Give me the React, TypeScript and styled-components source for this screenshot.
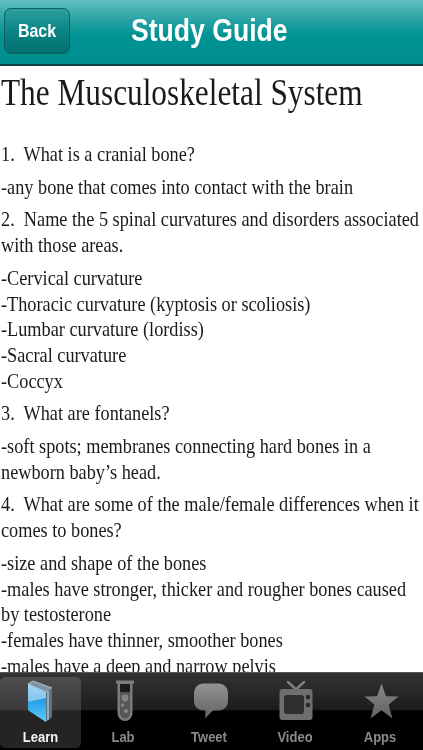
import React from "react";
import styled, { createGlobalStyle } from "styled-components";

const GlobalStyle = createGlobalStyle`
  html, body {
    margin: 0;
    padding: 0;
    background: #fff;
  }
  #root {
    width: 423px;
    height: 750px;
  }
`;

const lines: { text: string; gap: number }[] = [
  { text: "1.  What is a cranial bone?", gap: 0 },
  { text: "-any bone that comes into contact with the brain", gap: 7 },
  { text: "2.  Name the 5 spinal curvatures and disorders associated", gap: 7 },
  { text: "with those areas.", gap: 0 },
  { text: "-Cervical curvature", gap: 7 },
  { text: "-Thoracic curvature (kyptosis or scoliosis)", gap: 0 },
  { text: "-Lumbar curvature (lordiss)", gap: 0 },
  { text: "-Sacral curvature", gap: 0 },
  { text: "-Coccyx", gap: 0 },
  { text: "3.  What are fontanels?", gap: 7 },
  { text: "-soft spots; membranes connecting hard bones in a", gap: 7 },
  { text: "newborn baby’s head.", gap: 0 },
  { text: "4.  What are some of the male/female differences when it", gap: 7 },
  { text: "comes to bones?", gap: 0 },
  { text: "-size and shape of the bones", gap: 7 },
  { text: "-males have stronger, thicker and rougher bones caused", gap: 0 },
  { text: "by testosterone", gap: 0 },
  { text: "-females have thinner, smoother bones", gap: 0 },
  { text: "-males have a deep and narrow pelvis", gap: 0 },
];

const BookIcon = () => (
  <svg width="26" height="43" viewBox="0 0 26 43">
    <defs>
      <linearGradient id="bookTop" x1="0" y1="0" x2="0" y2="1">
        <stop offset="0" stopColor="#a4d6f4" />
        <stop offset="1" stopColor="#5aaee8" />
      </linearGradient>
      <linearGradient id="bookBottom" x1="0" y1="0" x2="0" y2="1">
        <stop offset="0" stopColor="#1f9ae8" />
        <stop offset="1" stopColor="#5ccbf6" />
      </linearGradient>
    </defs>
    <path d="M1 4 L6 1 L25 8 L19 12 Z" fill="#7f93a4" stroke="#c4d2dc" strokeWidth="0.8" />
    <path d="M19 12 L25 8 L25 37 L19 42 Z" fill="#5f7284" />
    <path d="M21 11 V40" stroke="#d5e2ea" strokeWidth="1" />
    <path d="M1 4 L19 12 L19 42 L1 30 Z" fill="url(#bookTop)" />
    <path d="M1 22 L19 18 L19 42 L1 30 Z" fill="url(#bookBottom)" />
  </svg>
);

const TubeIcon = () => (
  <svg width="18" height="42" viewBox="0 0 18 42">
    <path d="M0 0.5 H18 V3.5 H16.5 V33 A7.5 8 0 0 1 1.5 33 V3.5 H0 Z" fill="#7c7c7c" />
    <rect x="4" y="4" width="10" height="8" fill="#1a1a1a" />
    <path d="M4 12 H14 V33 A5 5.5 0 0 1 4 33 Z" fill="#565656" />
    <circle cx="9" cy="18" r="3.4" fill="#858585" />
    <circle cx="6.5" cy="25" r="1.7" fill="#858585" />
    <circle cx="10" cy="31" r="2.1" fill="#858585" />
  </svg>
);

const BubbleIcon = () => (
  <svg width="34" height="36" viewBox="0 0 34 36">
    <defs>
      <linearGradient id="bubbleFill" x1="0" y1="0" x2="0" y2="1">
        <stop offset="0" stopColor="#939393" />
        <stop offset="1" stopColor="#626262" />
      </linearGradient>
    </defs>
    <path
      d="M9 0.5 H25 A9 9 0 0 1 34 9.5 V18.5 A9 9 0 0 1 25 27.5 H19 L11 35.5 L11.5 27.5 H9 A9 9 0 0 1 0 18.5 V9.5 A9 9 0 0 1 9 0.5 Z"
      fill="url(#bubbleFill)"
    />
  </svg>
);

const TvIcon = () => (
  <svg width="34" height="40" viewBox="0 0 34 40">
    <path d="M9 1 L17 8.5 L25 1" fill="none" stroke="#7c7c7c" strokeWidth="2.6" strokeLinecap="round" />
    <rect x="0.5" y="8" width="33" height="31" rx="3" fill="#6e6e6e" />
    <rect x="5" y="14" width="20" height="19" rx="3" fill="#2f2f2f" />
    <circle cx="29" cy="16" r="2.2" fill="#262626" />
    <circle cx="29" cy="24" r="2.2" fill="#262626" />
  </svg>
);

const StarIcon = () => (
  <svg width="35" height="38" viewBox="0 0 36 38">
    <defs>
      <linearGradient id="starFill" x1="0" y1="0" x2="0" y2="1">
        <stop offset="0" stopColor="#8a8a8a" />
        <stop offset="1" stopColor="#5f5f5f" />
      </linearGradient>
    </defs>
    <path
      d="M18 1 L22.6 14 L35.5 14.4 L25.4 22.6 L29.2 37 L18 28.6 L6.8 37 L10.6 22.6 L0.5 14.4 L13.4 14 Z"
      fill="url(#starFill)"
    />
  </svg>
);

const tabs = [
  { label: "Learn", icon: <BookIcon />, active: true, shift: -1 },
  { label: "Lab", icon: <TubeIcon />, active: false, shift: 4 },
  { label: "Tweet", icon: <BubbleIcon />, active: false, shift: 4 },
  { label: "Video", icon: <TvIcon />, active: false, shift: 2 },
  { label: "Apps", icon: <StarIcon />, active: false, shift: 2 },
];

export default function App() {
  return (
    <>
      <GlobalStyle />
      <Page>
        <Header>
          <BackButton>
            <BackLabel>Back</BackLabel>
          </BackButton>
          <Title>Study Guide</Title>
        </Header>
        <Content>
          <Heading>The Musculoskeletal System</Heading>
          {lines.map((line) => (
            <Line key={line.text} $gap={line.gap}>
              {line.text}
            </Line>
          ))}
        </Content>
        <TabBar>
          {tabs.map((tab) => (
            <Tab key={tab.label} $active={tab.active}>
              <IconSlot $shift={tab.shift}>{tab.icon}</IconSlot>
              <TabLabel $active={tab.active}>{tab.label}</TabLabel>
            </Tab>
          ))}
        </TabBar>
      </Page>
    </>
  );
}

const Page = styled.div`
  width: 423px;
  height: 750px;
  display: flex;
  flex-direction: column;
  overflow: hidden;
  background: #fff;
`;

const Header = styled.header`
  height: 66px;
  flex: none;
  display: flex;
  align-items: center;
  padding: 0 0 3px 4px;
  box-sizing: border-box;
  background: linear-gradient(#62bfc0 0%, #2aa3a5 30%, #009393 55%, #008e8e 100%);
  border-bottom: 2px solid #103f40;
`;

const BackButton = styled.div`
  width: 66px;
  height: 46px;
  flex: none;
  display: flex;
  align-items: center;
  justify-content: center;
  box-sizing: border-box;
  border: 1px solid #0b5f60;
  border-radius: 7px;
  background: linear-gradient(#2d9f9f 0%, #0a8585 50%, #056f70 100%);
`;

const BackLabel = styled.span`
  color: #fff;
  font: bold 16px "Liberation Sans", Arial, sans-serif;
  transform: scaleY(1.18);
  filter: blur(0.3px);
`;

const Title = styled.div`
  margin-left: 61px;
  color: #fff;
  font: bold 26.6px "Liberation Sans", Arial, sans-serif;
  transform: scaleY(1.18);
  filter: blur(0.3px);
`;

const Content = styled.main`
  flex: 1;
  min-height: 0;
  overflow: hidden;
  padding: 5px 0 0 1px;
  color: #1a1a1a;
  font-family: "Liberation Serif", "Times New Roman", serif;
`;

const Heading = styled.h1`
  margin: 0 0 27px;
  font-weight: normal;
  font-size: 31.3px;
  line-height: 44px;
  transform: scaleY(1.18);
  transform-origin: left center;
  filter: blur(0.35px);
`;

const Line = styled.div<{ $gap: number }>`
  margin-top: ${(p) => p.$gap}px;
  font-size: 18.27px;
  line-height: 25.7px;
  white-space: pre;
  transform: scaleY(1.15);
  transform-origin: left center;
  filter: blur(0.35px);
`;

const TabBar = styled.nav`
  height: 78px;
  flex: none;
  box-sizing: border-box;
  display: grid;
  grid-template-columns: 81px 84px 88px 84px 86px;
  padding: 4px 0 2px;
  border-top: 1px solid #555;
  background: linear-gradient(#333 0%, #1c1c1c 48%, #000 49%, #000 100%);
`;

const Tab = styled.div<{ $active: boolean }>`
  display: flex;
  flex-direction: column;
  align-items: center;
  border-radius: 5px;
  background: ${(p) => (p.$active ? "rgba(255,255,255,0.14)" : "transparent")};
`;

const IconSlot = styled.div<{ $shift: number }>`
  height: 48px;
  display: flex;
  align-items: center;
  justify-content: center;
  margin-left: ${(p) => p.$shift}px;
`;

const TabLabel = styled.span<{ $active: boolean }>`
  margin-top: 4px;
  font: bold 13px "Liberation Sans", Arial, sans-serif;
  color: ${(p) => (p.$active ? "#f4f4f4" : "#8a8a8a")};
  transform: scaleY(1.18);
  filter: blur(0.3px);
`;
